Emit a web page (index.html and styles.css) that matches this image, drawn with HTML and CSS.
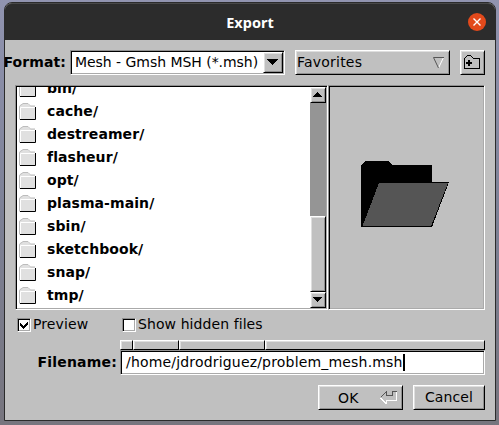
FILE: index.html
```
<!DOCTYPE html>
<html lang="en">
<head>
<meta charset="utf-8">
<title>Export</title>
<link rel="stylesheet" href="styles.css">
</head>
<body>
<svg class="defs" width="0" height="0" aria-hidden="true">
  <symbol id="folder" viewBox="0 0 17 17">
    <path d="M0 4V3l2-2h2V0h5v1l2 2h5v14H0z" fill="#e0e0e0"/>
    <path d="M.5 16V3.500L1.500 2.500 4 .5h5l2.500 2.500H16" fill="none" stroke="#bcbcbc"/>
    <path d="M1.500 16V4.500H16" fill="none" stroke="#fff"/>
    <path d="M1 16.500h15.500V4" fill="none" stroke="#000"/>
  </symbol>
</svg>
<div class="window">
  <header class="titlebar">
    <span class="title">Export</span>
    <span class="close"><svg width="18" height="18"><path d="M5.500 5.500l7 7M12.500 5.500l-7 7" stroke="#fff" stroke-width="1.400"/></svg></span>
  </header>
  <main class="content">
    <div class="toolbar">
      <label class="format-label">Format:</label>
      <div class="sunken choice"><span>Mesh - Gmsh MSH (*.msh)</span><span class="raised arrow"><svg width="16" height="17" shape-rendering="crispEdges"><path d="M2 5h11L7.500 11z"/></svg></span></div>
      <div class="raised favorites"><span>Favorites</span>
        <svg width="12" height="12"><path d="M10.500 .5L5.500 11" fill="none" stroke="#fff"/><path d="M11 .5H.5L5.500 11" fill="none" stroke="#555"/></svg>
      </div>
      <div class="raised newdir"><svg width="17" height="15" shape-rendering="crispEdges"><path d="M.5 13.500v-10l3-3h3l3 3h6v10z" fill="none" stroke="#000"/><path d="M2 8h6M5 5v6" stroke="#000" stroke-width="2"/></svg></div>
    </div>
    <div class="browser">
      <div class="sunken files">
        <ul class="list">
          <li><svg class="ico"><use href="#folder"/></svg>bin/</li>
          <li><svg class="ico"><use href="#folder"/></svg>cache/</li>
          <li><svg class="ico"><use href="#folder"/></svg>destreamer/</li>
          <li><svg class="ico"><use href="#folder"/></svg>flasheur/</li>
          <li><svg class="ico"><use href="#folder"/></svg>opt/</li>
          <li><svg class="ico"><use href="#folder"/></svg>plasma-main/</li>
          <li><svg class="ico"><use href="#folder"/></svg>sbin/</li>
          <li><svg class="ico"><use href="#folder"/></svg>sketchbook/</li>
          <li><svg class="ico"><use href="#folder"/></svg>snap/</li>
          <li><svg class="ico"><use href="#folder"/></svg>tmp/</li>
        </ul>
        <div class="scrollbar">
          <span class="raised step"><svg width="12" height="12" shape-rendering="crispEdges"><path d="M1 8h9L5.500 3z"/></svg></span>
          <span class="track"></span>
          <span class="raised thumb"></span>
          <span class="raised step"><svg width="12" height="12" shape-rendering="crispEdges"><path d="M1 3h9L5.500 8z"/></svg></span>
        </div>
      </div>
      <div class="sunken preview">
        <svg width="88" height="67" shape-rendering="crispEdges"><path d="M0 4l4-4h23l4 4h40v17h17L71 66H0z"/><path d="M18 22h69L70 65H1.500z" fill="#555"/></svg>
      </div>
    </div>
    <div class="options">
      <label class="option first"><span class="sunken box"><svg width="10" height="10" shape-rendering="crispEdges"><path d="M1 3v3l3 3 5-5V1L4 6z"/></svg></span>Preview</label>
      <label class="option hidden-files"><span class="sunken box"></span>Show hidden files</label>
    </div>
    <div class="filename">
      <span class="filename-label">Filename:</span>
      <div class="field">
        <div class="crumbs"><i class="c1"></i><i class="c2"></i><i class="c3"></i><i class="c4"></i></div>
        <div class="sunken input"><span>/home/jdrodriguez/problem_mesh.msh</span><b class="caret"></b></div>
      </div>
    </div>
    <div class="actions">
      <div class="raised button ok"><span>OK</span><svg width="18" height="14" shape-rendering="crispEdges"><path d="M6.500 13v-3.500h10V.5M6.500 13L.5 7" fill="none" stroke="#fff"/><path d="M.5 6.500L6.500 .5v4h5.500V.5h4.500" fill="none" stroke="#555"/></svg></div>
      <div class="raised button">Cancel</div>
    </div>
  </main>
</div>
</body>
</html>
```

FILE: styles.css
```
* { box-sizing: border-box; }
body {
  margin: 0;
  width: 499px;
  height: 425px;
  overflow: hidden;
  padding: 2px 3px 4px 4px;
  background: linear-gradient(#9194b0, #7d8196 50%, #77757e);
  font: 14px/17px "DejaVu Sans", sans-serif;
  color: #000;
}
svg { display: block; flex: none; }
.defs { position: absolute; }
.window {
  width: 492px;
  height: 419px;
  border: 1px solid #2b2b2b;
  border-radius: 8px 8px 0 0;
  background: #c0c0c0;
}
.titlebar {
  display: flex;
  align-items: center;
  justify-content: flex-end;
  height: 37px;
  padding-right: 9px;
  border-top: 1px solid #484848;
  border-radius: 7px 7px 0 0;
  background: #2c2c2c;
}
.title {
  flex: 1;
  padding-left: 27px;
  text-align: center;
  color: #fff;
  font: bold 14.5px/20px "Noto Sans", sans-serif;
}
.close { border-radius: 50%; background: #e2491b; }
.content { padding: 10px 10px 0; }
.raised {
  border: 1px solid;
  border-color: #fff #000 #000 #fff;
  box-shadow: inset 1px 1px #dedede, inset -1px -1px #909090;
  background: #c0c0c0;
}
.sunken {
  border: 1px solid;
  border-color: #909090 #fff #fff #909090;
  box-shadow: inset 1px 1px #000, inset -1px -1px #aaa;
  background: #fff;
}
.toolbar { display: flex; height: 25px; }
.format-label {
  width: 55px;
  line-height: 24px;
  font-weight: bold;
  display: flex;
  justify-content: flex-end;
  padding-right: 4px;
  letter-spacing: .1px;
  white-space: nowrap;
}
.choice {
  display: flex;
  justify-content: space-between;
  width: 215px;
  padding: 1px 1px 1px 4px;
  line-height: 20px;
  letter-spacing: -.04px;
  white-space: nowrap;
}
.arrow { width: 20px; height: 21px; padding: 1px; }
.favorites {
  display: flex;
  align-items: center;
  justify-content: space-between;
  width: 155px;
  margin: 0 10px;
  padding: 0 4px 0 1px;
  letter-spacing: .22px;
}
.newdir { width: 25px; padding: 4px 3px; }
.browser { display: flex; height: 225px; margin-top: 10px; }
.files { display: flex; width: 313px; padding: 1px; }
.list {
  flex: 1;
  display: flex;
  flex-direction: column;
  justify-content: flex-end;
  height: 221px;
  margin: 0;
  padding: 0 0 1px 2px;
  overflow: hidden;
  list-style: none;
  font-weight: bold;
  letter-spacing: .08px;
}
.list li { display: flex; gap: 11px; flex: none; height: 23px; line-height: 23px; }
.ico { width: 17px; height: 17px; margin-top: 3px; }
.scrollbar { display: flex; flex-direction: column; width: 16px; }
.step { height: 16px; padding: 1px; }
.track { height: 113px; background: #959595; }
.thumb { height: 76px; }
.preview {
  display: flex;
  width: 157px;
  padding: 75px 0 0 32px;
  background: #c0c0c0;
}
.options { display: flex; gap: 34px; height: 14px; margin: 8px 0 0 2px; }
.option { display: flex; gap: 2px; line-height: 13px; }
.first { width: 71px; letter-spacing: .1px; }
.hidden-files { letter-spacing: .08px; }
.box { width: 14px; height: 14px; padding: 1px; }
.filename { display: flex; margin-top: 8px; }
.filename-label {
  width: 105px;
  padding: 14px 3px 0 0;
  text-align: right;
  font-weight: bold;
  letter-spacing: .2px;
}
.field { width: 365px; }
.crumbs { display: flex; height: 10px; }
.crumbs i {
  border: 1px solid;
  border-color: #fff #000 #000 #fff;
  box-shadow: inset 1px 1px #dedede;
}
.c1 { width: 13px; }
.c2 { width: 46px; }
.c3 { width: 86px; }
.c4 { width: 220px; }
.input { display: flex; height: 25px; padding: 3px 5px; letter-spacing: .18px; }
.caret { width: 2px; height: 17px; background: #000; }
.actions { display: flex; justify-content: flex-end; gap: 10px; margin-top: 10px; }
.button { width: 72px; height: 25px; line-height: 22px; text-align: center; letter-spacing: .12px; }
.ok { display: flex; justify-content: space-between; align-items: center; width: 85px; padding: 0 4px 0 19px; }
```
